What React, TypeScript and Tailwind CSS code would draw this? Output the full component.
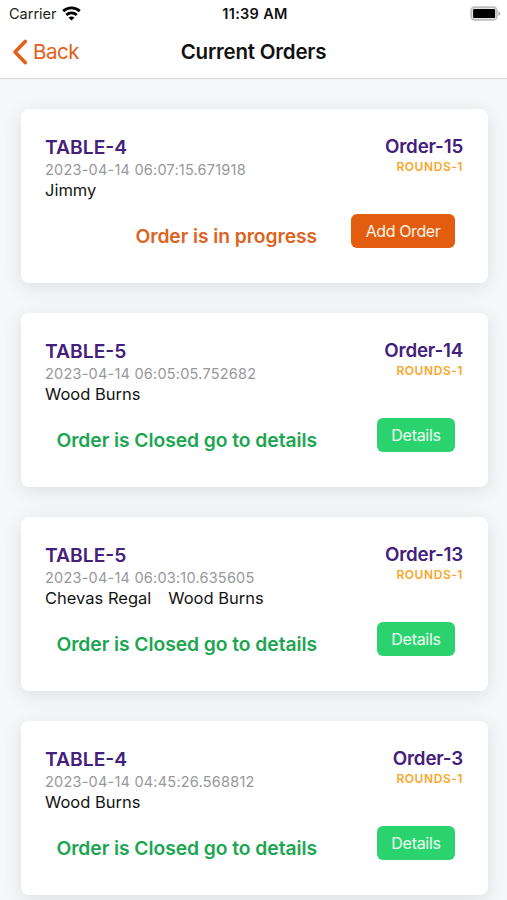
type Order = {
  table: string;
  time: string;
  guests: string[];
  order: string;
  open: boolean;
};

const orders: Order[] = [
  { table: "TABLE-4", time: "2023-04-14 06:07:15.671918", guests: ["Jimmy"], order: "Order-15", open: true },
  { table: "TABLE-5", time: "2023-04-14 06:05:05.752682", guests: ["Wood Burns"], order: "Order-14", open: false },
  { table: "TABLE-5", time: "2023-04-14 06:03:10.635605", guests: ["Chevas Regal", "Wood Burns"], order: "Order-13", open: false },
  { table: "TABLE-4", time: "2023-04-14 04:45:26.568812", guests: ["Wood Burns"], order: "Order-3", open: false },
];

function WifiIcon() {
  return (
    <svg className="-mt-[2px]" width="19" height="15" viewBox="0 0 19 15" fill="none" stroke="#000" strokeWidth="2.8">
      <path d="M1.2 5.1C5.8 0.9 13.2 0.9 17.8 5.1" />
      <path d="M4.3 8.9C7.2 6.1 11.8 6.1 14.7 8.9" />
      <path d="M9.5 14.5L6.5 11.5C8.1 10 10.9 10 12.5 11.5Z" fill="#000" stroke="none" />
    </svg>
  );
}

function BatteryIcon() {
  return (
    <svg className="-mt-[2px]" width="31" height="15" viewBox="0 0 31 15">
      <rect x="1.2" y="1.2" width="25.6" height="12.6" rx="3.4" fill="#e6e6e6" stroke="#bebebe" strokeWidth="1.8" />
      <rect x="3.1" y="3" width="22" height="9" rx="1" fill="#000" />
      <path d="M28.4 5.2C31 6 31 9 28.4 9.8Z" fill="#b0b0b0" />
    </svg>
  );
}

function Header() {
  return (
    <header className="h-[79px] border-b border-[#d8d8da] bg-white">
      <div className="grid h-7 grid-cols-3 items-center pl-[9px] pr-[6px]">
        <div className="flex items-center gap-[5px] text-[14.5px] leading-7 text-[#222]">
          <span>Carrier</span>
          <WifiIcon />
        </div>
        <span className="text-center text-[14.5px] font-semibold leading-7 tracking-[0.3px] text-[#111]">11:39 AM</span>
        <div className="flex justify-end">
          <BatteryIcon />
        </div>
      </div>
      <div className="grid h-[48px] grid-cols-[1fr_auto_1fr] items-center pl-[12px] pr-3">
        <div className="flex items-center gap-[5px] text-[20.5px] tracking-[-0.5px] text-[#e2601a]">
          <svg width="16" height="26" viewBox="0 0 16 26" fill="none" stroke="#e2601a" strokeWidth="3.6" strokeLinecap="round" strokeLinejoin="round">
            <path d="M13.2 2.4L3 13L13.2 23.6" />
          </svg>
          <span>Back</span>
        </div>
        <h1 className="text-[20.5px] font-semibold tracking-[-0.2px] text-[#111]">Current Orders</h1>
      </div>
    </header>
  );
}

function OrderCard({ table, time, guests, order, open }: Order) {
  return (
    <article className="h-[174px] rounded-[8px] bg-white pl-[24px] pr-[25px] pt-[26px] shadow-[0_4px_18px_rgba(60,70,75,0.13)]">
      <div className="flex h-[79px] justify-between">
        <div>
          <h2 className="text-[19.3px] font-[560] leading-6 text-[#43207c]">{table}</h2>
          <p className="mt-px text-[14.5px] leading-[19px] tracking-[0.22px] text-[#98989c]">{time}</p>
          <p className="flex gap-[17px] text-[16.5px] leading-[23px] text-[#151515]">
            {guests.map((guest) => (
              <span key={guest}>{guest}</span>
            ))}
          </p>
        </div>
        <div className="text-right">
          <p className="text-[18.8px] font-[560] leading-6 tracking-[-0.2px] text-[#43207c]">{order}</p>
          <p className="-mt-px text-[12px] font-semibold leading-[18px] tracking-[0.55px] text-[#f8a52c]">ROUNDS-1</p>
        </div>
      </div>
      <div className="flex items-start justify-end pr-[8px]">
        {open ? (
          <>
            <p className="mr-[34px] mt-[10px] text-[19.3px] font-[560] leading-6 tracking-[-0.08px] text-[#dd6420]">Order is in progress</p>
            <button className="h-[34px] w-[104px] rounded-[6px] bg-[#e25d10] text-[16px] leading-[34px] tracking-[-0.4px] text-[#fff4e8]">Add Order</button>
          </>
        ) : (
          <>
            <p className="mr-[60px] mt-[10px] text-[19.3px] font-[560] leading-6 tracking-[-0.06px] text-[#1ca650]">Order is Closed go to details</p>
            <button className="h-[34px] w-[78px] rounded-[6px] bg-[#2bd36f] text-[16px] leading-[34px] tracking-[-0.3px] text-[#f0fff4]">Details</button>
          </>
        )}
      </div>
    </article>
  );
}

export default function App() {
  return (
    <div className="h-[900px] overflow-hidden bg-[#f6f7f9] font-['Inter',sans-serif]">
      <Header />
      <main className="flex flex-col gap-[30px] pl-[21px] pr-[19px] pt-[30px]">
        {orders.map((o) => (
          <OrderCard key={o.order} {...o} />
        ))}
      </main>
    </div>
  );
}
